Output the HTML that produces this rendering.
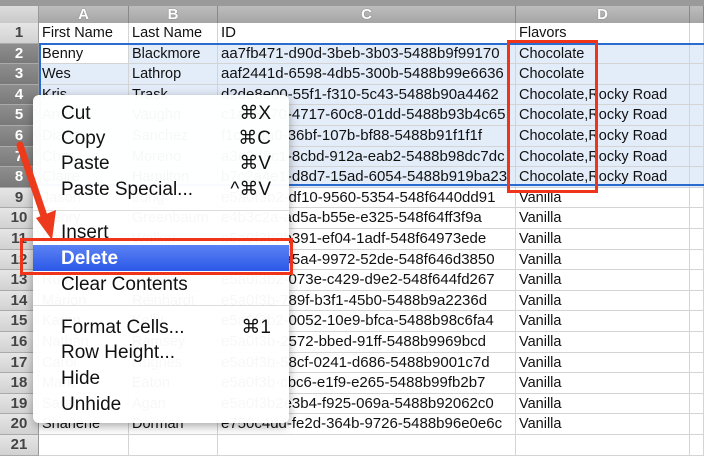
<!DOCTYPE html>
<html><head><meta charset="utf-8"><style>
*{margin:0;padding:0;box-sizing:border-box}
body{width:704px;height:438px;overflow:hidden;background:#fff;font-family:"Liberation Sans",sans-serif;position:relative}
.a{position:absolute}
.c{position:absolute;font-size:14.5px;color:#111;white-space:nowrap;overflow:hidden;line-height:20px;padding-left:3px;border-right:1px solid #d4d4d4;border-bottom:1px solid #d4d4d4}
.rh{position:absolute;left:0;width:39px;font-size:15px;font-weight:bold;color:#444;text-align:center;line-height:20px;background:linear-gradient(#e6e6e6,#d2d2d2);border-bottom:1px solid #aaa;border-right:1px solid #999}
.rh.s{background:linear-gradient(#8e8e8e,#7a7a7a);color:#fff}
.ch{position:absolute;top:6px;height:17px;font-size:15px;font-weight:bold;color:#fff;text-align:center;line-height:17px;background:linear-gradient(#bdbdbd,#a5a5a5);border-right:1px solid #888;text-shadow:0 0 1px #555}
.mi{position:absolute;left:28px;font-size:19px;color:#111;line-height:24px}
.sc{position:absolute;right:18px;font-size:19px;color:#111;line-height:24px}
</style></head><body>
<div class="a" style="left:0;top:0;width:704px;height:6px;background:#9a9a9a"></div>
<div class="a" style="left:0;top:6px;width:39px;height:17px;background:linear-gradient(#ddd,#c9c9c9);border-right:1px solid #999"></div>
<div class="ch" style="left:39px;width:90px">A</div>
<div class="ch" style="left:129px;width:89px">B</div>
<div class="ch" style="left:218px;width:298px">C</div>
<div class="ch" style="left:516px;width:174px">D</div>
<div class="ch" style="left:690px;width:14px"></div>
<div id="g"></div>
<script>
var ids=["ID","aa7fb471-d90d-3beb-3b03-5488b9f99170","aaf2441d-6598-4db5-300b-5488b99e6636","d2de8e00-55f1-f310-5c43-5488b90a4462","c1a08b70-4717-60c8-01dd-5488b93b4c65","f1c2b4a0-36bf-107b-bf88-5488b91f1f1f","a3e0d8c1-8cbd-912a-eab2-5488b98dc7dc","b7c2a4e1-d8d7-15ad-6054-5488b919ba23","e5a0f3b2-df10-9560-5354-548f6440dd91","e4b3c2a-ad5a-b55e-e325-548f64ff3f9a","e5a0f3b2b391-ef04-1adf-548f64973ede","e5a0f3b2a5a4-9972-52de-548f646d3850","e5a0f3b2-073e-c429-d9e2-548f644fd267","e5a0f3b-789f-b3f1-45b0-5488b9a2236d","e5a0f3b2-0052-10e9-bfca-5488b98c6fa4","e5a0f3b-2572-bbed-91ff-5488b9969bcd","e5a0f3b-58cf-0241-d686-5488b9001c7d","e5a0f3b-cbc6-e1f9-e265-5488b99fb2b7","e5a0f3b2e3b4-f925-069a-5488b92062c0","e750c4dd-fe2d-364b-9726-5488b96e0e6c"];
var fn=["First Name","Benny","Wes","Kris","Anna","Diane","Chris","Claire","Jason","Henry","Lucas","Linda","Ruth","Marion","Karen","Nathan","Carol","Mark","Sarah","Sharlene"];
var ln=["Last Name","Blackmore","Lathrop","Trask","Vaughn","Sanchez","Moreno","Hamilton","Long","Greenbaum","Walker","Rowe","Sullivan","Reinhardt","Kelly","Ramsey","Hughes","Eaton","Agan","Dorman"];
var h="";
for(var i=0;i<21;i++){var t=23+i*20.6;var n=i+1;var sel=(n>=2&&n<=8);var bg=sel?"#e3ecf9":"#fff";
h+='<div class="rh'+(sel?' s':'')+'" style="top:'+t+'px;height:20.6px">'+n+'</div>';
var f=i<20?[fn[i],ln[i],ids[i],i==0?"Flavors":(i<3?"Chocolate":(i<8?"Chocolate,Rocky Road":"Vanilla"))]:["","","",""];
var xs=[39,129,218,516,690],ws=[90,89,298,174,14];
for(var k=0;k<5;k++){var b=(n==2&&k==0)?"#fff":bg;h+='<div class="c" style="left:'+xs[k]+'px;top:'+t+'px;width:'+ws[k]+'px;height:20.6px;background:'+b+(k==2?';font-size:15px':'')+'">'+(k<4?f[k]:"")+'</div>';}}
document.getElementById("g").innerHTML=h;
</script>
<div class="a" style="left:39px;top:43px;width:670px;height:143px;border:2px solid #2a6bd0;border-right:none"></div>
<div class="a" style="left:507px;top:40px;width:91px;height:153px;border:3px solid #f0341a"></div>
<div class="a" style="left:33px;top:95px;width:256px;height:328px;background:rgba(255,255,255,0.97);border-radius:6px;box-shadow:0 3px 10px rgba(0,0,0,.35)">
<div class="mi" style="top:7px">Cut</div><div class="sc" style="top:7px">⌘X</div>
<div class="mi" style="top:32px">Copy</div><div class="sc" style="top:32px">⌘C</div>
<div class="mi" style="top:57px">Paste</div><div class="sc" style="top:57px">⌘V</div>
<div class="mi" style="top:83px">Paste Special...</div><div class="sc" style="top:83px">^⌘V</div>
<div class="a" style="left:0;top:115px;width:256px;height:1px;background:#ddd"></div>
<div class="mi" style="top:126px">Insert</div>
<div class="a" style="left:0;top:150px;width:256px;height:26px;background:linear-gradient(#5b82f3,#2b58e8)"></div>
<div class="mi" style="top:152px;color:#fff;font-weight:bold">Delete</div>
<div class="mi" style="top:178px">Clear Contents</div>
<div class="a" style="left:0;top:210px;width:256px;height:1px;background:#ddd"></div>
<div class="mi" style="top:221px">Format Cells...</div><div class="sc" style="top:221px">⌘1</div>
<div class="mi" style="top:246px">Row Height...</div>
<div class="mi" style="top:272px">Hide</div>
<div class="mi" style="top:298px">Unhide</div>
</div>
<div class="a" style="left:20px;top:238px;width:273px;height:37px;border:3px solid #f0341a"></div>
<svg class="a" style="left:0;top:0" width="704" height="438"><line x1="20" y1="145" x2="46" y2="222" stroke="#ee3a1c" stroke-width="7" stroke-linecap="round"/><polygon points="36,218 56,210 52,240" fill="#ee3a1c"/></svg>
</body></html>
